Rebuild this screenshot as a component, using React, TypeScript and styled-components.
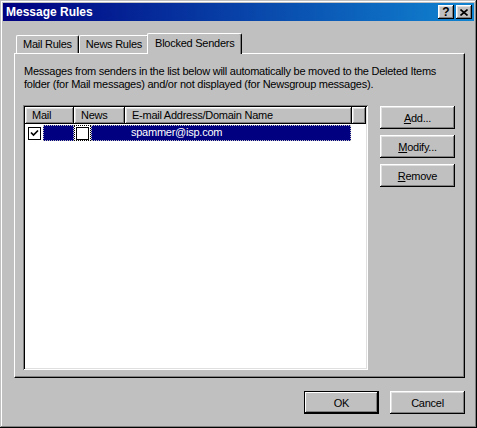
import React from "react";
import styled, { createGlobalStyle, css } from "styled-components";

const Global = createGlobalStyle`
  html, body { margin: 0; padding: 0; background: #c0c0c0; }
  body { font-family: "Liberation Sans", Arial, sans-serif; font-size: 11px; letter-spacing: -0.25px; color: #000; }
  * { box-sizing: border-box; }
`;

const raised = css`
  box-shadow: inset -1px -1px #000, inset 1px 1px #fff, inset -2px -2px #808080, inset 2px 2px #dfdfdf;
`;

const Window = styled.div`
  width: 477px;
  height: 428px;
  background: #c0c0c0;
  padding: 3px;
  display: flex;
  flex-direction: column;
  box-shadow: inset -1px -1px #000, inset 1px 1px #c0c0c0, inset -2px -2px #808080, inset 2px 2px #fff;
`;

const TitleBar = styled.div`
  height: 18px;
  flex: none;
  background: linear-gradient(to right, #000080, #1084d0);
  display: flex;
  align-items: center;
  padding: 0 2px 0 3px;
`;

const Title = styled.div`
  flex: 1;
  color: #fff;
  font-weight: bold;
  font-size: 12px;
  letter-spacing: 0;
`;

const CaptionButton = styled.div<{ $gap?: boolean }>`
  width: 16px;
  height: 14px;
  background: #c0c0c0;
  ${raised};
  display: flex;
  align-items: center;
  justify-content: center;
  margin-left: ${(p) => (p.$gap ? "2px" : "0")};
  font-weight: bold;
  font-size: 12px;
  line-height: 14px;
  letter-spacing: 0;
  color: #000;
`;

const Client = styled.div`
  flex: 1;
  display: flex;
  flex-direction: column;
  padding: 12px 9px 11px 11px;
`;

const TabStrip = styled.div`
  display: flex;
  align-items: flex-end;
  height: 20px;
  padding-left: 2px;
  position: relative;
  z-index: 1;
`;

const Tab = styled.div<{ $active?: boolean }>`
  height: ${(p) => (p.$active ? "21px" : "18px")};
  margin: ${(p) => (p.$active ? "0 -2px -1px -2px" : "0")};
  padding: ${(p) => (p.$active ? "3px 7px 0 7px" : "2px 6px 0 6px")};
  background: #c0c0c0;
  border-top: 1px solid #fff;
  border-left: 1px solid #fff;
  border-right: 1px solid #000;
  border-top-left-radius: 2px;
  border-top-right-radius: 2px;
  box-shadow: inset -1px 0 #808080;
  white-space: nowrap;
  position: relative;
  z-index: ${(p) => (p.$active ? 2 : 0)};
`;

const Panel = styled.div`
  flex: 1;
  background: #c0c0c0;
  border-top: 1px solid #fff;
  border-left: 1px solid #fff;
  border-right: 1px solid #000;
  border-bottom: 1px solid #000;
  box-shadow: inset -1px -1px #808080;
  padding: 11px 9px 7px 8px;
  display: flex;
  flex-direction: column;
`;

const Description = styled.div`
  line-height: 13px;
  padding-left: 1px;
  margin-bottom: 14px;
  white-space: nowrap;
`;

const Body = styled.div`
  flex: 1;
  display: flex;
  gap: 12px;
`;

const ListView = styled.div`
  width: 346px;
  background: #fff;
  box-shadow: inset 1px 1px #808080, inset -1px -1px #fff, inset 2px 2px #000, inset -2px -2px #dfdfdf;
  padding: 2px;
  display: flex;
  flex-direction: column;
`;

const Header = styled.div`
  display: flex;
  height: 17px;
  flex: none;
`;

const HeaderCell = styled.div<{ $w: number }>`
  width: ${(p) => p.$w}px;
  flex: none;
  background: #c0c0c0;
  ${raised};
  padding: 2px 0 0 7px;
  white-space: nowrap;
  overflow: hidden;
`;

const HeaderFill = styled.div`
  flex: 1;
  background: #c0c0c0;
  ${raised};
`;

const Row = styled.div`
  display: flex;
  align-items: center;
  height: 16px;
  margin-top: 1px;
`;

const CheckCell = styled.div<{ $w: number; $focus?: boolean }>`
  width: ${(p) => p.$w}px;
  height: 16px;
  flex: none;
  display: flex;
  align-items: center;
  justify-content: center;
  outline: ${(p) => (p.$focus ? "1px dotted #000" : "none")};
  outline-offset: -1px;
`;

const Selected = styled.div<{ $w?: number; $pad?: number }>`
  width: ${(p) => p.$w ?? 260}px;
  flex: none;
  height: 16px;
  background: #000080;
  color: #fff;
  outline: 1px dotted #c0c0c0;
  outline-offset: -1px;
  padding: 1px 0 0 ${(p) => p.$pad ?? 0}px;
  white-space: nowrap;
`;

const Box = styled.div`
  width: 13px;
  height: 13px;
  background: #fff;
  border: 1px solid #000;
  display: flex;
  align-items: center;
  justify-content: center;
`;

const Side = styled.div`
  display: flex;
  flex-direction: column;
  gap: 6px;
  padding-top: 1px;
`;

const Button = styled.button<{ $default?: boolean }>`
  width: 75px;
  height: 23px;
  background: #c0c0c0;
  border: none;
  font-family: "Liberation Sans", Arial, sans-serif;
  font-size: 11px;
  letter-spacing: -0.25px;
  color: #000;
  padding: 0;
  ${(p) =>
    p.$default
      ? css`
          box-shadow: inset 0 0 0 1px #000, inset -2px -2px #000, inset 2px 2px #fff, inset -3px -3px #808080;
        `
      : raised};
`;

const Footer = styled.div`
  display: flex;
  justify-content: flex-end;
  gap: 11px;
  padding-top: 13px;
`;

const Check = () => (
  <svg width="9" height="9" viewBox="0 0 9 9">
    <path d="M1 3.5 L3.5 6 L8 1.5" stroke="#000" strokeWidth="1.7" fill="none" />
  </svg>
);

export default function App() {
  return (
    <>
      <Global />
      <Window>
        <TitleBar>
          <Title>Message Rules</Title>
          <CaptionButton>?</CaptionButton>
          <CaptionButton $gap>
            <svg width="8" height="7" viewBox="0 0 8 7">
              <path d="M0.5 0.5 L7.5 6.5 M7.5 0.5 L0.5 6.5" stroke="#000" strokeWidth="1.6" />
            </svg>
          </CaptionButton>
        </TitleBar>
        <Client>
          <TabStrip>
            <Tab>Mail Rules</Tab>
            <Tab>News Rules</Tab>
            <Tab $active>Blocked Senders</Tab>
          </TabStrip>
          <Panel>
            <Description>
              Messages from senders in the list below will automatically be moved to the Deleted Items
              <br />
              folder (for Mail messages) and/or not displayed (for Newsgroup messages).
            </Description>
            <Body>
              <ListView>
                <Header>
                  <HeaderCell $w={49}>Mail</HeaderCell>
                  <HeaderCell $w={51}>News</HeaderCell>
                  <HeaderCell $w={227}>E-mail Address/Domain Name</HeaderCell>
                  <HeaderFill />
                </Header>
                <Row>
                  <CheckCell $w={18}>
                    <Box>
                      <Check />
                    </Box>
                  </CheckCell>
                  <Selected $w={31} />
                  <CheckCell $w={17} $focus>
                    <Box />
                  </CheckCell>
                  <Selected $pad={40}>spammer@isp.com</Selected>
                </Row>
              </ListView>
              <Side>
                <Button>
                  <u>A</u>dd...
                </Button>
                <Button>
                  <u>M</u>odify...
                </Button>
                <Button>
                  <u>R</u>emove
                </Button>
              </Side>
            </Body>
          </Panel>
          <Footer>
            <Button $default>OK</Button>
            <Button>Cancel</Button>
          </Footer>
        </Client>
      </Window>
    </>
  );
}
